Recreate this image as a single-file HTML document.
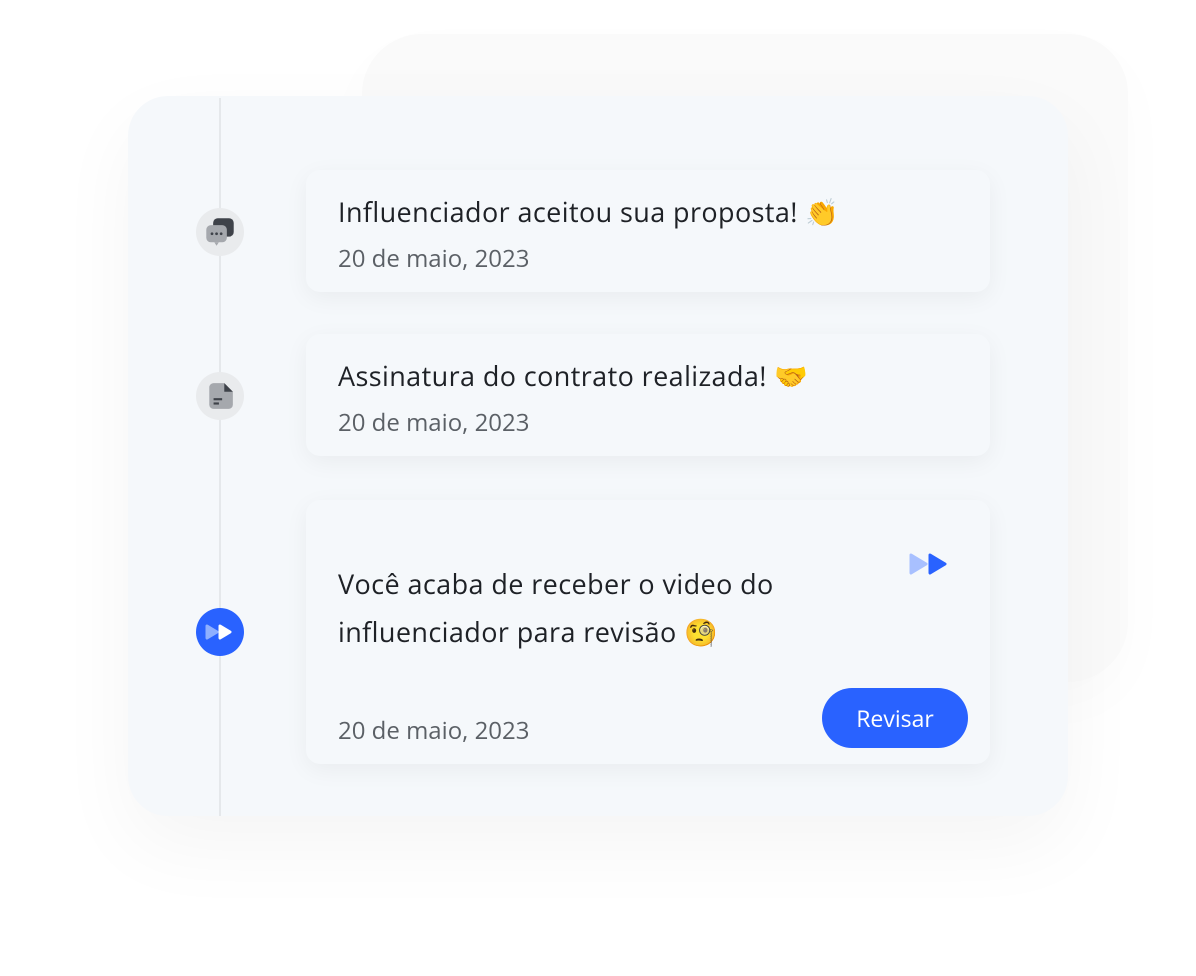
<!DOCTYPE html>
<html><head><meta charset="utf-8"><style>
body{margin:0;width:1196px;height:976px;background:#fff;position:relative;overflow:hidden;font-family:"Open Sans","Liberation Sans",sans-serif}
.back{position:absolute;left:362px;top:34px;width:766px;height:648px;border-radius:60px;background:#fafafa;box-shadow:0 20px 60px rgba(0,0,0,0.02)}
.main{position:absolute;left:128px;top:96px;width:940px;height:720px;border-radius:40px;background:#f5f8fb;box-shadow:0 30px 80px rgba(0,0,0,0.045)}
.line{position:absolute;left:219px;top:98px;width:2px;height:718px;background:#e5e8eb}
.dot{position:absolute;left:196px;width:48px;height:48px;border-radius:50%;background:#e9ebed;display:flex;align-items:center;justify-content:center}
.card{position:absolute;left:306px;width:684px;background:#f5f8fb;border-radius:14px;box-shadow:0 6px 24px rgba(0,0,0,0.05)}
.t{position:absolute;left:32px;font-size:27px;letter-spacing:0.4px;color:#1e2126;line-height:48px;white-space:nowrap}
.d{position:absolute;left:32px;font-size:24px;color:#5b6066}
.btn{position:absolute;right:22px;bottom:16px;width:146px;height:60px;border-radius:30px;background:#2962ff;color:#fff;font-size:23px;display:flex;align-items:center;justify-content:center}
</style></head><body>
<div class="back"></div>
<div class="main"></div>
<div class="line"></div>
<div class="dot" style="top:208px"><svg width="32" height="32" viewBox="0 0 28 28"><rect x="8" y="2" width="18" height="16" rx="4" fill="#3e4249"/><rect x="2" y="8" width="18" height="15" rx="4" fill="#a5a8ad"/><path d="M9 23l2 3 2-3z" fill="#a5a8ad"/><circle cx="7" cy="15.5" r="1.2" fill="#3e4249"/><circle cx="11" cy="15.5" r="1.2" fill="#3e4249"/><circle cx="15" cy="15.5" r="1.2" fill="#3e4249"/></svg></div>
<div class="dot" style="top:372px"><svg width="30" height="30" viewBox="0 0 28 28"><path d="M4 6a4 4 0 0 1 4-4h10l8 8v12a4 4 0 0 1-4 4H8a4 4 0 0 1-4-4z" fill="#a5a8ad"/><path d="M18 2v8h8z" fill="#3e4249"/><rect x="8" y="16" width="8" height="2" fill="#3e4249"/><rect x="8" y="20" width="5" height="2" fill="#3e4249"/></svg></div>
<div class="dot" style="top:608px;background:#2962ff"><svg width="30" height="20" viewBox="0 0 30 20"><path d="M2 4l10 6-10 6z" fill="#8fb0ff" stroke="#8fb0ff" stroke-width="3" stroke-linejoin="round"/><path d="M15 4l10 6-10 6z" fill="#fff" stroke="#fff" stroke-width="3" stroke-linejoin="round"/></svg></div>
<div class="card" style="top:170px;height:122px"><div class="t" style="top:18px">Influenciador aceitou sua proposta! 👏</div><div class="d" style="top:72px">20 de maio, 2023</div></div>
<div class="card" style="top:334px;height:122px"><div class="t" style="top:18px">Assinatura do contrato realizada! 🤝</div><div class="d" style="top:72px">20 de maio, 2023</div></div>
<div class="card" style="top:500px;height:264px"><div class="t" style="top:60px">Você acaba de receber o video do<br>influenciador para revisão 🧐</div>
<svg style="position:absolute;left:602px;top:52px" width="42" height="24" viewBox="0 0 42 24"><path d="M3 3l15 9-15 9z" fill="#a8c0ff" stroke="#a8c0ff" stroke-width="3" stroke-linejoin="round"/><path d="M22 3l15 9-15 9z" fill="#2962ff" stroke="#2962ff" stroke-width="3" stroke-linejoin="round"/></svg>
<div class="d" style="top:214px">20 de maio, 2023</div><div class="btn">Revisar</div></div>
</body></html>
